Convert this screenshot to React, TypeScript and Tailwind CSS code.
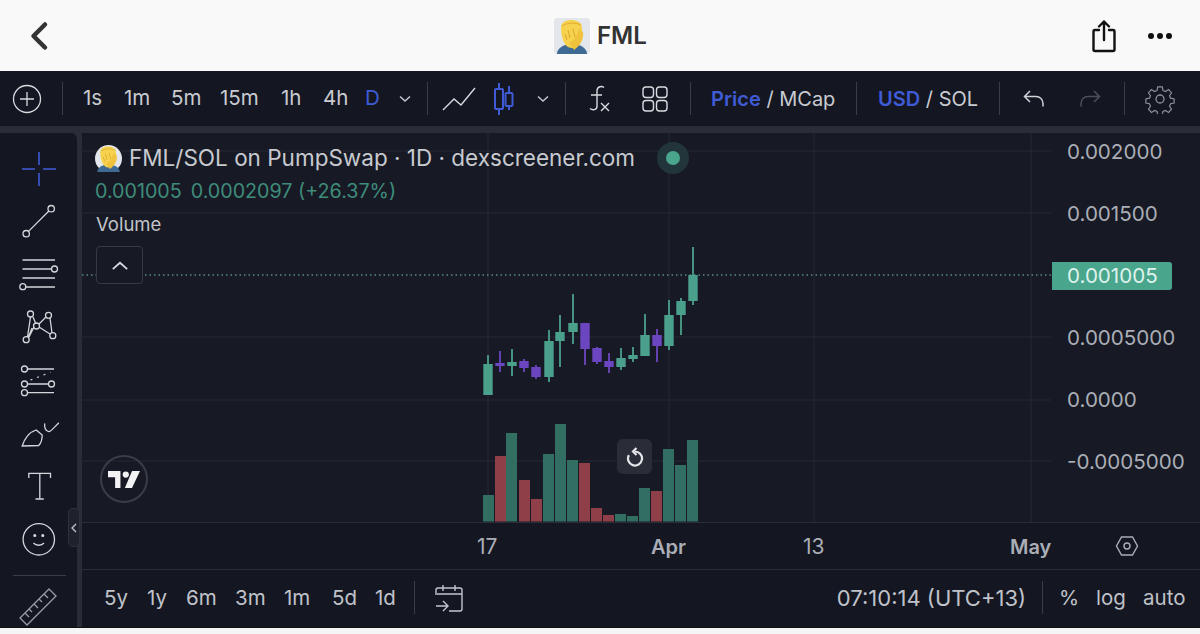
const GREEN = "#4aa08a";
const PURPLE = "#6c46c0";

// page coordinates: x center, wick top, wick bottom, body top, body bottom
const candles: [number, number, number, number, number, string][] = [
  [488, 355, 395, 364, 395, GREEN],
  [500, 351, 372, 363, 366, PURPLE],
  [512, 349, 376, 362, 366, GREEN],
  [524, 359, 372, 361, 368, PURPLE],
  [536, 365, 379, 367, 377, PURPLE],
  [549, 330, 382, 341, 377, GREEN],
  [560, 315, 367, 332, 341, GREEN],
  [573, 294, 344, 323, 332, GREEN],
  [585, 323, 365, 323, 349, PURPLE],
  [597, 347, 364, 348, 362, PURPLE],
  [609, 353, 373, 361, 367, PURPLE],
  [621, 348, 370, 358, 367, GREEN],
  [633, 347, 362, 355, 359, GREEN],
  [645, 314, 356, 335, 356, GREEN],
  [657, 329, 362, 335, 346, PURPLE],
  [669, 300, 350, 315, 346, GREEN],
  [681, 298, 335, 301, 315, GREEN],
  [693, 247, 305, 275, 301, GREEN],
];

// left edge, top, colour
const bars: [number, number, string][] = [
  [483, 495, "g"],
  [495, 456, "r"],
  [506, 433, "g"],
  [519, 480, "r"],
  [531, 499, "r"],
  [543, 454, "g"],
  [555, 424, "g"],
  [567, 460, "g"],
  [579, 463, "r"],
  [591, 508, "r"],
  [603, 515, "r"],
  [615, 514, "g"],
  [627, 516, "g"],
  [639, 488, "g"],
  [651, 491, "r"],
  [663, 449, "g"],
  [675, 465, "g"],
  [687, 440, "g"],
];

function Avatar({ round, className }: { round?: boolean; className: string }) {
  return (
    <svg viewBox="0 0 36 36" className={className}>
      <rect width="36" height="36" rx={round ? 18 : 3} fill="#e3e6ea" />
      <path d="M3 36c0-6 7-10 15-10s15 4 15 10z" fill="#3f6a94" />
      <path d="M7 10C7 4 12 2 17 2s11 2 11 8c0 9-2 19-10 20C10 30 7 19 7 10z" fill="#f6d24e" />
      <path d="M8 8c4-3 14-4 19-1" stroke="#e2b035" strokeWidth="1.200" fill="none" />
      <path d="M15 25c5-2 8-8 10-14l4 3c1 7-3 14-9 18z" fill="#f1c33c" />
      <path d="M14 12l2 8M19 11l2 8M11 16l2 6" stroke="#d9a52c" strokeWidth="1" fill="none" />
    </svg>
  );
}

function Sep({ className }: { className: string }) {
  return <div className={`w-px h-[33px] shrink-0 bg-[#3a3d48] ${className}`} />;
}

function Chevron({ className }: { className: string }) {
  return (
    <svg viewBox="0 0 14 8" className={`w-[14px] h-[8px] shrink-0 ${className}`} fill="none" stroke="#c4c6cc" strokeWidth="1.5">
      <path d="M2 1.5l5 4.5 5-4.5" />
    </svg>
  );
}

function TopBar() {
  return (
    <div className="h-[55px] shrink-0 bg-[#141722] flex items-center text-[20.5px] text-[#c9cbd1]">
      <svg viewBox="0 0 30 30" className="w-[30px] h-[30px] ml-[12px] shrink-0" fill="none" stroke="#d8dade" strokeWidth="1.3">
        <circle cx="15" cy="15" r="13.5" />
        <path d="M15 8v14M8 15h14" />
      </svg>
      <Sep className="ml-[20px]" />
      <span className="ml-[20px] w-[41px]">1s</span>
      <span className="w-[47px]">1m</span>
      <span className="w-[49px]">5m</span>
      <span className="w-[61px]">15m</span>
      <span className="w-[42px]">1h</span>
      <span className="w-[42px]">4h</span>
      <span className="w-[33px] text-[#3f5bd6]">D</span>
      <Chevron className="" />
      <Sep className="ml-[15px]" />
      <svg viewBox="0 0 34 24" className="w-[34px] h-[24px] ml-[14px] shrink-0" fill="none" stroke="#d8dade" strokeWidth="1.4">
        <path d="M1 23l11-11 7 6L33 1" />
      </svg>
      <svg viewBox="0 0 22 32" className="w-[22px] h-[32px] ml-[17px] shrink-0" fill="none" stroke="#3f5bd6" strokeWidth="2">
        <path d="M6 0v6M6 26v6M16 3v7M16 23v4" />
        <rect x="2" y="6" width="8" height="20" rx="1" />
        <rect x="12.5" y="10" width="7" height="13" rx="1" />
      </svg>
      <Chevron className="ml-[21px]" />
      <Sep className="ml-[15px]" />
      <svg viewBox="0 0 22 28" className="w-[22px] h-[28px] ml-[22px] shrink-0" fill="none" stroke="#d8dade" strokeWidth="1.4">
        <path d="M16 2.500c-2-1.500-6.500-1.500-7 3V21c0 4.500-4.500 4.500-7 2.500M3 10h11M13 18l8 8M21 18l-8 8" />
      </svg>
      <svg viewBox="0 0 26 26" className="w-[26px] h-[26px] ml-[32px] shrink-0" fill="none" stroke="#d8dade" strokeWidth="1.4">
        <rect x="1" y="1" width="10.500" height="10.500" rx="3" />
        <rect x="14.500" y="1" width="10.500" height="10.500" rx="3" />
        <rect x="1" y="14.500" width="10.500" height="10.500" rx="3" />
        <rect x="14.500" y="14.500" width="10.500" height="10.500" rx="3" />
      </svg>
      <Sep className="ml-[22px]" />
      <span className="ml-[20px] w-[124px] text-[20px] whitespace-nowrap">
        <b className="font-semibold text-[#3f5bd6]">Price</b> / MCap
      </span>
      <Sep className="ml-[21px]" />
      <span className="ml-[21px] w-[100px] text-[20px] whitespace-nowrap">
        <b className="font-semibold text-[#3f5bd6]">USD</b> / SOL
      </span>
      <Sep className="ml-[21px]" />
      <svg viewBox="0 0 22 18" className="w-[22px] h-[18px] ml-[23px] shrink-0" fill="none" stroke="#d0d2d8" strokeWidth="1.5">
        <path d="M7 1L1.500 6.500 7 12M2 6.500h11c4 0 7 3 7 7v3" />
      </svg>
      <svg viewBox="0 0 22 18" className="w-[22px] h-[18px] ml-[34px] shrink-0" fill="none" stroke="#4c4f5a" strokeWidth="1.5">
        <path d="M15 1l5.500 5.500L15 12M20 6.500H9c-4 0-7 3-7 7v3" />
      </svg>
      <Sep className="ml-[23px]" />
      <svg viewBox="0 0 30 30" className="w-[30px] h-[30px] ml-[20px] shrink-0" fill="none" stroke="#8e919b" strokeWidth="1.3">
        <circle cx="15" cy="15" r="4" />
        <path d="M12.500 1.500h5l.8 4 2.700 1.200 3.500-2.200 3.300 3.500-2.200 3.400 1.100 2.700 4 .8v4.600l-4 .8-1.100 2.700 2.200 3.400-3.300 3.500-3.500-2.200-2.700 1.200-.8 4h-5l-.8-4-2.700-1.200-3.500 2.200-3.300-3.500 2.200-3.400-1.100-2.700-4-.8v-4.600l4-.8 1.100-2.700-2.200-3.400 3.300-3.500 3.500 2.200 2.700-1.200z" transform="translate(1.500 1.500) scale(.9)" />
      </svg>
    </div>
  );
}

function Tool({ children }: { children: React.ReactNode }) {
  return (
    <svg viewBox="0 0 44 44" className="w-[44px] h-[44px] shrink-0" fill="none" stroke="#d4d6db" strokeWidth="1.3">
      {children}
    </svg>
  );
}

function LeftTools() {
  return (
    <aside className="w-[77px] shrink-0 bg-[#141722] rounded-tr-[6px] flex flex-col items-center pt-[14px] pl-px gap-[9px] overflow-hidden">
      <Tool>
        <path d="M22 5v13M22 26v13M5 22h13M26 22h13" stroke="#3f5bd6" strokeWidth="1.600" />
      </Tool>
      <Tool>
        <circle cx="9.200" cy="33.700" r="3.200" />
        <circle cx="34.200" cy="8.700" r="3.200" />
        <path d="M11.500 31.400L31.900 11" />
      </Tool>
      <Tool>
        <path d="M5.500 7H38M5.500 16h29M5.500 25H38M9 34h29" />
        <circle cx="37.500" cy="16" r="3" />
        <circle cx="5.800" cy="33.700" r="3" />
      </Tool>
      <Tool>
        <path d="M10.500 31l3-20M15 22l-3.500 9M16 11l3 7M22 18l7-7M33 12l2 15M33 28l-11-7M17 21l-5 10" />
        <circle cx="9.200" cy="33.700" r="3" />
        <circle cx="13.500" cy="8" r="3" />
        <circle cx="19.500" cy="20" r="3" />
        <circle cx="31.500" cy="9.300" r="3" />
        <circle cx="35.800" cy="29.700" r="3" />
      </Tool>
      <Tool>
        <path d="M10.500 10H37M10.500 25H32M10.500 33.700H37" />
        <path d="M13.500 21l20-7.700" strokeDasharray="2 5" />
        <circle cx="7.500" cy="10" r="3" />
        <circle cx="7.500" cy="25" r="3" />
        <circle cx="34.500" cy="25" r="3" />
        <circle cx="7.500" cy="33.700" r="3" />
      </Tool>
      <Tool>
        <path d="M5.200 34c2-7 7-14 14-16l6 5c0 4-1 8-3.500 10.500z" />
        <path d="M27.800 11.300c-1 4 1 8 4 8.400 2 .3 6-5 10-9" />
      </Tool>
      <Tool>
        <path d="M11.800 13V8.300h21.700V13M22.800 8.300V34M18.500 34h8.300" />
      </Tool>
      <Tool>
        <circle cx="21.800" cy="21.300" r="15.700" />
        <circle cx="17.800" cy="17.500" r=".9" fill="#d4d6db" />
        <circle cx="25.800" cy="17.500" r=".9" fill="#d4d6db" />
        <path d="M16.500 25c2.500 3 8 3 10.500 0" />
      </Tool>
      <div className="w-[53px] h-px bg-[#3a3d48] shrink-0 mt-[4px]" />
      <svg viewBox="0 0 56 56" className="w-[56px] h-[56px] shrink-0 -mt-[5px]" fill="none" stroke="#9a9da6" strokeWidth="1.300">
        <path d="M38 9l7 7-29 29-7-7zM33 14l4 4M28 19l3 3M23 24l4 4M18 29l3 3M14 33l4 4" />
      </svg>
    </aside>
  );
}

function Chart() {
  const hLines = [151, 213, 337, 400, 461];
  const vLines = [488, 669, 814, 1031];
  return (
    <div className="relative h-[389px] shrink-0 bg-[#171a25] rounded-tl-[6px] overflow-hidden">
      <svg viewBox="82 133 1118 389" className="absolute inset-0 w-[1118px] h-[389px]">
        {hLines.map((y) => (
          <line key={y} x1="82" x2="1051" y1={y} y2={y} stroke="#262934" />
        ))}
        {vLines.map((x) => (
          <line key={x} x1={x} x2={x} y1="133" y2="522" stroke="#262934" />
        ))}
        <line x1="82" x2="1052" y1="275" y2="275" stroke="#7cc4b1" strokeDasharray="1.500 3" />
        {candles.map(([x, wt, wb, bt, bb, c]) => (
          <g key={x} fill={c}>
            <rect x={x - 0.9} y={wt} width="1.8" height={wb - wt} />
            <rect x={x - 4.7} y={bt} width="9.4" height={bb - bt} />
          </g>
        ))}
        {bars.map(([x, top, c]) => (
          <rect key={x} x={x} y={top} width="11" height={521.5 - top} fill={c === "g" ? "#326e62" : "#8f3f47"} />
        ))}
      </svg>

      <div className="absolute left-[13px] top-[11px] flex items-center gap-[7px] text-[22.5px] leading-[28px] text-[#c8cad0] whitespace-nowrap">
        <Avatar round className="w-[27px] h-[27px]" />
        <span>FML/SOL on PumpSwap · 1D · dexscreener.com</span>
      </div>
      <div className="absolute left-[575px] top-[9px] w-[32px] h-[32px] rounded-full bg-[#22353a] flex items-center justify-center">
        <div className="w-[14px] h-[14px] rounded-full bg-[#4aa58d]" />
      </div>
      <div className="absolute left-[13px] top-[47px] flex gap-[9px] text-[19.7px] leading-[22px] text-[#3f8c7b] whitespace-nowrap">
        <span>0.001005</span>
        <span>0.0002097 (+26.37%)</span>
      </div>
      <div className="absolute left-[14px] top-[80px] text-[18.5px] leading-[22px] text-[#c2c4ca]">Volume</div>
      <div className="absolute left-[14px] top-[113px] w-[47px] h-[38px] rounded-[4px] border border-[#363a45] bg-[#171a25] flex items-center justify-center">
        <svg viewBox="0 0 20 12" className="w-[18px] h-[11px]" fill="none" stroke="#d8dade" strokeWidth="2">
          <path d="M2 10l8-7 8 7" />
        </svg>
      </div>

      <div className="absolute left-[18px] top-[322px] w-[48px] h-[48px] rounded-full border-2 border-[#3a3d48] flex items-center justify-center">
        <svg viewBox="0 0 36 19" className="w-[32px] h-[17px]" fill="#f2f2f4">
          <path d="M14 19H8V7H0V0h14zM27 19h-8L27 0h9z" />
          <circle cx="20" cy="4" r="3.500" />
        </svg>
      </div>

      <div className="absolute left-[535px] top-[306px] w-[35px] h-[35px] rounded-[6px] bg-[#2a2d38] flex items-center justify-center">
        <svg viewBox="0 0 20 20" className="w-[20px] h-[20px]" fill="none" stroke="#e4e5e9" strokeWidth="2.200">
          <path d="M10 4.500a7 7 0 1 1-6.100 3.600" />
          <path d="M11.500 1L8 4.500 11.500 8" />
        </svg>
      </div>

      <div className="absolute left-[985px] top-0 text-[20.6px] leading-[24px] text-[#abaeb6] whitespace-nowrap">
        <div className="absolute left-0 top-[7px]">0.002000</div>
        <div className="absolute left-0 top-[69px]">0.001500</div>
        <div className="absolute left-0 top-[193px]">0.0005000</div>
        <div className="absolute left-0 top-[255px]">0.0000</div>
        <div className="absolute left-0 top-[317px]">-0.0005000</div>
      </div>
      <div className="absolute left-[970px] top-[129px] w-[120px] h-[28px] pl-[15px] rounded-r-[3px] bg-[#4aa58d] text-[20.6px] leading-[28px] text-[#dff3ec]">
        0.001005
      </div>
    </div>
  );
}

function TimeAxis() {
  return (
    <div className="relative h-[48px] shrink-0 border-t border-[#2a2d38] border-b text-[21px] text-[#abaeb6]">
      <span className="absolute left-[395px] top-[8px]">17</span>
      <span className="absolute left-[569px] top-[9px] text-[20px] font-semibold">Apr</span>
      <span className="absolute left-[721px] top-[8px]">13</span>
      <span className="absolute left-[928px] top-[9px] text-[20px] font-semibold">May</span>
      <svg viewBox="0 0 24 22" className="absolute left-[1033px] top-[12px] w-[24px] h-[22px]" fill="none" stroke="#abaeb6" strokeWidth="1.400">
        <path d="M6.500 2h11l5 9-5 9h-11l-5-9z" />
        <circle cx="12" cy="11" r="3" />
      </svg>
    </div>
  );
}

function BottomBar() {
  return (
    <div className="h-[57px] shrink-0 flex items-center text-[20.5px] text-[#c0c2c9] -mt-px pt-[2px]">
      <span className="ml-[22px] w-[43px]">5y</span>
      <span className="w-[39px]">1y</span>
      <span className="w-[49px]">6m</span>
      <span className="w-[49px]">3m</span>
      <span className="w-[48px]">1m</span>
      <span className="w-[43px]">5d</span>
      <span className="w-[39px]">1d</span>
      <Sep className="-mt-[2px]" />
      <svg viewBox="0 0 28 30" className="w-[28px] h-[30px] ml-[20px] shrink-0 -mt-[2px]" fill="none" stroke="#c4c6cc" strokeWidth="1.400">
        <path d="M1 12V7a2 2 0 0 1 2-2h22a2 2 0 0 1 2 2v19a2 2 0 0 1-2 2h-11M2 11h25M8 2v6M20 2v6M1 23h11M8 18l5 5-5 5" />
      </svg>
      <span className="ml-auto text-[22px] whitespace-nowrap">07:10:14 (UTC+13)</span>
      <Sep className="ml-[16px] -mt-[2px]" />
      <span className="ml-[16px] w-[37px]">%</span>
      <span className="w-[47px]">log</span>
      <span className="w-[57px]">auto</span>
    </div>
  );
}

export default function App() {
  return (
    <div className="w-[1200px] h-[634px] overflow-hidden flex flex-col bg-[#f9f9f9] font-[Inter]">
      <header className="h-[71px] shrink-0 bg-[#f9f9f9] flex items-center relative">
        <svg viewBox="0 0 20 30" className="w-[20px] h-[30px] ml-[29px]" fill="none" stroke="#333" strokeWidth="4.500" strokeLinecap="round" strokeLinejoin="round">
          <path d="M16 3.500L4.500 15 16 26.500" />
        </svg>
        <div className="ml-[505px] flex items-center gap-[7px]">
          <Avatar className="w-[36px] h-[36px]" />
          <span className="text-[24px] font-semibold text-[#333]">FML</span>
        </div>
        <svg viewBox="0 0 24 34" className="w-[24px] h-[34px] ml-auto mr-[32px]" fill="none" stroke="#111" strokeWidth="2.400" strokeLinecap="round" strokeLinejoin="round">
          <path d="M7 11H3a1.500 1.500 0 0 0-1.500 1.500v18A1.500 1.500 0 0 0 3 32h18a1.500 1.500 0 0 0 1.500-1.500v-18A1.500 1.500 0 0 0 21 11h-4M12 21V2.500M7 7.500l5-5 5 5" />
        </svg>
        <div className="flex gap-[3px] mr-[28px]">
          <div className="w-[6px] h-[6px] rounded-full bg-[#111]" />
          <div className="w-[6px] h-[6px] rounded-full bg-[#111]" />
          <div className="w-[6px] h-[6px] rounded-full bg-[#111]" />
        </div>
      </header>
      <TopBar />
      <div className="h-[501px] shrink-0 bg-[#2a2d38] pt-[7px] flex relative">
        <LeftTools />
        <div className="ml-[5px] w-[1118px] flex flex-col bg-[#141722]">
          <Chart />
          <TimeAxis />
          <BottomBar />
        </div>
        <div className="absolute left-[68px] top-[382px] w-[12px] h-[39px] rounded-[5px] bg-[#1f222d] border border-[#2f323d] flex items-center justify-center">
          <svg viewBox="0 0 6 10" className="w-[6px] h-[10px]" fill="none" stroke="#c4c6cc" strokeWidth="1.300">
            <path d="M5 1L1 5l4 4" />
          </svg>
        </div>
      </div>
      <div className="flex-1 bg-[#f5f5f5] border-t border-[#111]" />
    </div>
  );
}
